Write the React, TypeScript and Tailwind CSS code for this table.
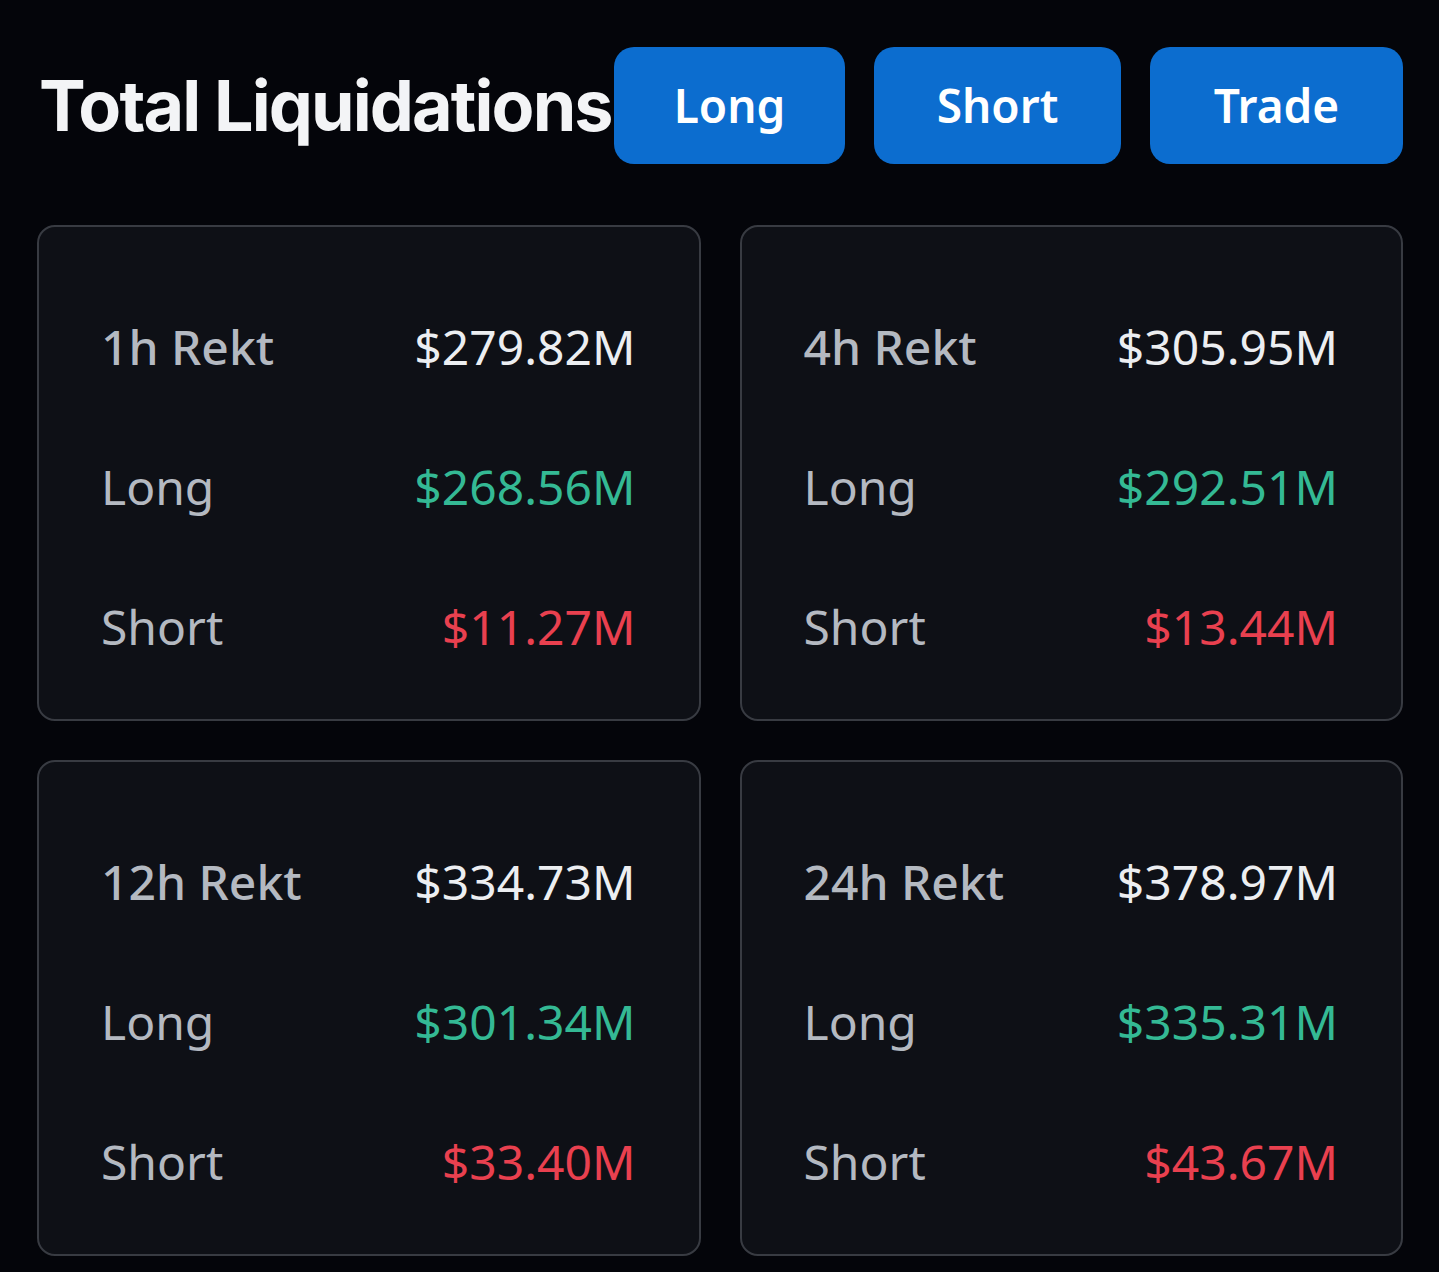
import React from "react";

type Card = { label: string; total: string; long: string; short: string };

const cards: Card[] = [
  { label: "1h Rekt", total: "$279.82M", long: "$268.56M", short: "$11.27M" },
  { label: "4h Rekt", total: "$305.95M", long: "$292.51M", short: "$13.44M" },
  { label: "12h Rekt", total: "$334.73M", long: "$301.34M", short: "$33.40M" },
  { label: "24h Rekt", total: "$378.97M", long: "$335.31M", short: "$43.67M" },
];

const buttons = [
  { label: "Long", width: "w-[231px]" },
  { label: "Short", width: "w-[247px]" },
  { label: "Trade", width: "w-[253px]" },
];

// Tarjeta con el resumen de liquidaciones de un periodo
function RektCard({ card }: { card: Card }) {
  return (
    <div className="flex h-[496px] flex-col gap-[82px] rounded-[18px] border-[2.5px] border-[#383b42] bg-[#0e1016] pl-[62px] pr-[63px] pt-[91px]">
      <div className="flex items-center justify-between leading-[58px]">
        <span className="text-[48px] font-medium text-[#b4b9c1]">{card.label}</span>
        <span className="text-[48px] text-[#eceef1]">{card.total}</span>
      </div>
      <div className="flex items-center justify-between leading-[58px]">
        <span className="text-[48px] text-[#b4b9c1]">Long</span>
        <span className="text-[48px] text-[#34b994]">{card.long}</span>
      </div>
      <div className="flex items-center justify-between leading-[58px]">
        <span className="text-[48px] text-[#b4b9c1]">Short</span>
        <span className="text-[48px] text-[#e9404f]">{card.short}</span>
      </div>
    </div>
  );
}

export default function App() {
  return (
    <div
      className="min-h-[1272px] w-[1439px] bg-[#04050a] pl-[37px] pr-[36px] pt-[47px]"
      style={{ fontFamily: '"Noto Sans", "Open Sans", sans-serif' }}
    >
      {/* Cabecera: titulo y botones */}
      <div className="flex items-center">
        <h1
          className="ml-[2px] text-[70px] font-bold leading-none tracking-[-0.027em] text-[#f3f4f6]"
          style={{ fontFamily: 'Inter, "Liberation Sans", sans-serif' }}
        >
          Total Liquidations
        </h1>
        <div className="ml-auto flex gap-[29px]">
          {buttons.map((b) => (
            <button
              key={b.label}
              className={`flex h-[117px] ${b.width} items-center justify-center rounded-[20px] bg-[#0c6dcf] text-[46px] font-semibold text-white`}
            >
              {b.label}
            </button>
          ))}
        </div>
      </div>

      {/* Tarjetas de liquidaciones */}
      <div className="mt-[61px] grid grid-cols-2 gap-[39px]">
        {cards.map((c) => (
          <RektCard key={c.label} card={c} />
        ))}
      </div>
    </div>
  );
}
